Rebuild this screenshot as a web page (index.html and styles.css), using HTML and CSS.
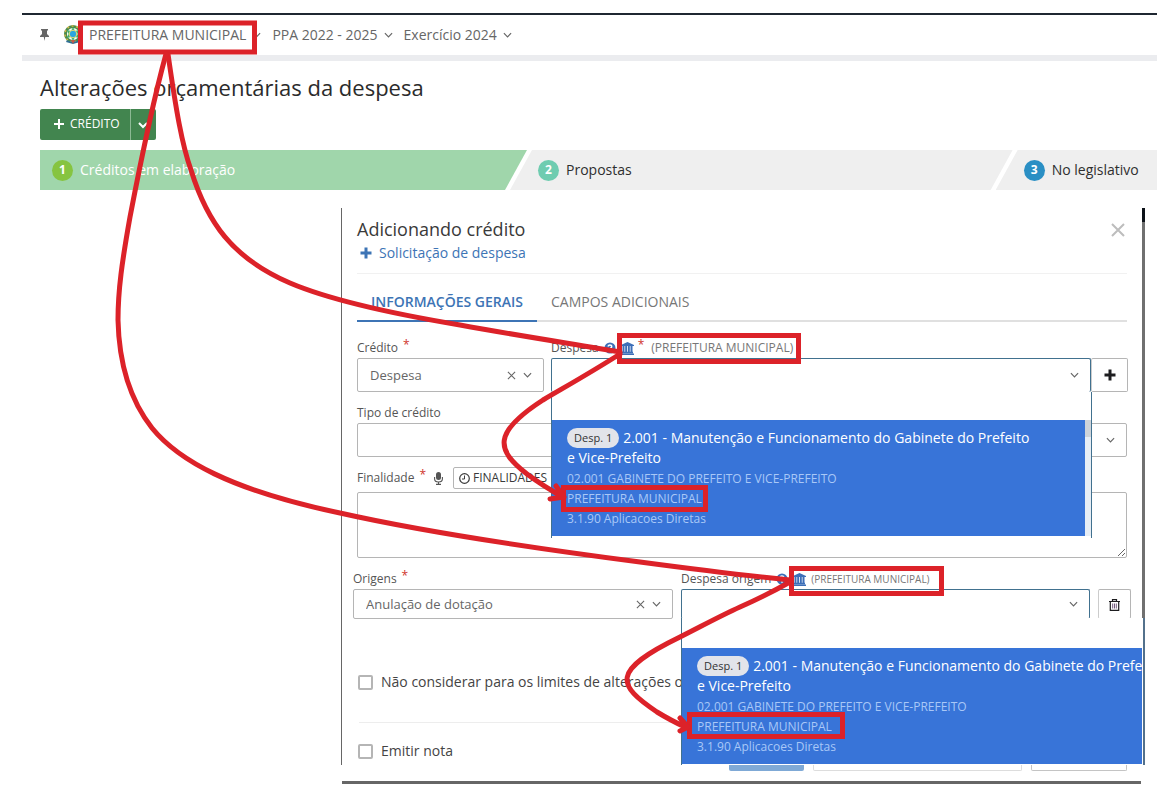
FILE: index.html
```html
<!DOCTYPE html>
<html lang="pt-BR">
<head>
<meta charset="utf-8">
<meta name="viewport" content="width=device-width, initial-scale=1">
<title>Alterações orçamentárias da despesa</title>
<link rel="stylesheet" href="styles.css">
</head>
<body>
<svg class="sprite" aria-hidden="true">
  <symbol id="chevron" viewBox="0 0 10 6"><path d="M1 1l4 4 4-4" fill="none" stroke="currentColor" stroke-width="1.3"/></symbol>
  <symbol id="cross" viewBox="0 0 10 10"><path d="M1 1l8 8M9 1l-8 8" fill="none" stroke="currentColor" stroke-width="1.2"/></symbol>
  <symbol id="plus" viewBox="0 0 12 12"><path d="M6 0.500v11M0.500 6h11" fill="none" stroke="currentColor" stroke-width="3"/></symbol>
  <symbol id="help" viewBox="0 0 12 12"><circle cx="6" cy="6" r="5.500" fill="currentColor"/><path d="M4.200 4.600C4.200 2.300 7.800 2.400 7.700 4.600 7.600 5.900 6 5.700 6 7.200M6 8.200v1.500" fill="none" stroke="#fff" stroke-width="1.500"/></symbol>
  <symbol id="bank" viewBox="0 0 13 13"><path d="M6.500 0L13 3v1H0V3zM1.500 4h2v6H1.500zM4.200 4h1.900v6H4.200zM6.900 4h1.900v6H6.900zM9.500 4h2v6H9.500zM1 9.800h11v1.500H1zM0 11.500h13V13H0z" fill="currentColor"/></symbol>
</svg>

<div class="page">
  <header class="topbar">
    <button class="pin" type="button" aria-label="Fixar menu"><svg width="9" height="12" viewBox="0 0 9 12"><path d="M1 0h7v1.500H7V5l2 2v1H5.200L4.500 12 3.800 8H0V7l2-2V1.500H1z" fill="currentColor"/></svg></button>
    <svg class="emblem" width="18" height="20" viewBox="0 0 18 20" aria-hidden="true">
      <circle cx="9" cy="9" r="7.500" fill="none" stroke="#4d8b4b" stroke-width="3"/>
      <circle cx="9" cy="9" r="8" fill="none" stroke="#d9b94a" stroke-width="1.500" stroke-dasharray="2 2.500"/>
      <path d="M9 2l2 4 4-1-1.500 4L15 13l-4-1-2 4-2-4-4 1 1.500-4L3 5l4 1z" fill="#3fae6d"/>
      <circle cx="9" cy="9" r="3.800" fill="#2ba6df" stroke="#e8dc70"/>
      <path d="M3 15c3 2 9 2 12 0l1 2-7 2-7-2z" fill="#2f6f96"/>
      <path d="M7 15l2 4 2-4z" fill="#c8584a"/>
    </svg>
    <button class="context" type="button">PREFEITURA MUNICIPAL<svg width="9" height="6"><use href="#chevron"/></svg></button>
    <button class="context" type="button">PPA 2022 - 2025<svg width="9" height="6"><use href="#chevron"/></svg></button>
    <button class="context" type="button">Exercício 2024<svg width="9" height="6"><use href="#chevron"/></svg></button>
  </header>

  <main class="content">
    <h1 class="page-title">Alterações orçamentárias da despesa</h1>
    <div class="split-button">
      <button class="split-main" type="button"><svg width="10" height="10" viewBox="0 0 10 10"><path d="M5 0v10M0 5h10" stroke="currentColor" stroke-width="2"/></svg>CRÉDITO</button>
      <button class="split-toggle" type="button" aria-label="Mais opções"><svg width="10" height="7" viewBox="0 0 10 7"><path d="M1 1l4 4 4-4" fill="none" stroke="currentColor" stroke-width="2"/></svg></button>
    </div>
    <ol class="steps">
      <li class="step step-active"><span class="step-number lime">1</span>Créditos em elaboração</li>
      <li class="step"><span class="step-number teal">2</span>Propostas</li>
      <li class="step"><span class="step-number blue">3</span>No legislativo</li>
    </ol>
  </main>

  <section class="dialog" role="dialog" aria-labelledby="dialog-title">
    <div class="dialog-body">
      <div class="dialog-header">
        <div>
          <h2 class="dialog-title" id="dialog-title">Adicionando crédito</h2>
          <a class="request-link" href="#"><svg width="12" height="12"><use href="#plus"/></svg>Solicitação de despesa</a>
        </div>
        <button class="close" type="button" aria-label="Fechar"><svg width="14" height="14" viewBox="0 0 14 14"><path d="M1 1l12 12M13 1L1 13" stroke="currentColor" stroke-width="2"/></svg></button>
      </div>
      <div class="tabs" role="tablist">
        <button class="tab tab-active" type="button" role="tab" aria-selected="true">INFORMAÇÕES GERAIS</button>
        <button class="tab" type="button" role="tab" aria-selected="false">CAMPOS ADICIONAIS</button>
      </div>

      <div class="row credit-row">
        <div class="field">
          <label class="label" for="credito">Crédito <span class="required">*</span></label>
          <div class="control">
            <select id="credito"><option>Despesa</option></select>
            <span class="tools"><button class="clear" type="button" aria-label="Limpar"><svg width="9" height="9"><use href="#cross"/></svg></button><svg width="9" height="6"><use href="#chevron"/></svg></span>
          </div>
        </div>
        <div class="field">
          <label class="label" for="despesa">Despesa <svg class="help" width="12" height="12"><use href="#help"/></svg><svg class="bank" width="13" height="13"><use href="#bank"/></svg><span class="required">*</span><span class="entity">(PREFEITURA MUNICIPAL)</span></label>
          <div class="group">
            <div class="control open">
              <select id="despesa"><option></option></select>
              <span class="tools"><svg width="9" height="6"><use href="#chevron"/></svg></span>
              <div class="popup popup-scroll">
                <input class="search" type="text" aria-label="Buscar despesa">
                <div class="options" role="listbox">
                  <div class="option" role="option" aria-selected="true">
                    <div class="option-title"><span class="pill">Desp. 1</span>2.001 - Manutenção e Funcionamento do Gabinete do Prefeito<br>e Vice-Prefeito</div>
                    <div>02.001 GABINETE DO PREFEITO E VICE-PREFEITO</div>
                    <div>PREFEITURA MUNICIPAL</div>
                    <div>3.1.90 Aplicacoes Diretas</div>
                  </div>
                  <div class="scroll"><div class="thumb"></div></div>
                </div>
              </div>
            </div>
            <button class="square" type="button" aria-label="Adicionar despesa"><svg width="12" height="12"><use href="#plus"/></svg></button>
          </div>
        </div>
      </div>

      <div class="field type-field">
        <label class="label" for="tipo">Tipo de crédito</label>
        <div class="control">
          <select id="tipo"><option></option></select>
          <span class="tools"><svg width="9" height="6"><use href="#chevron"/></svg></span>
        </div>
      </div>

      <div class="field purpose-field">
        <div class="purpose-head">
          <label class="label" for="finalidade">Finalidade <span class="required">*</span></label>
          <button class="mic" type="button" aria-label="Ditar"><svg width="9" height="13" viewBox="0 0 9 13"><rect x="2" width="5" height="8" rx="2.500" fill="currentColor"/><path d="M.600 5v2c0 4 7.800 4 7.800 0V5M4.500 10v2M2 12.400h5" fill="none" stroke="currentColor" stroke-width="1.100"/></svg></button>
          <button class="purposes" type="button"><svg width="11" height="11" viewBox="0 0 11 11"><circle cx="5.500" cy="5.500" r="4.800" fill="none" stroke="currentColor" stroke-width="1.200"/><path d="M5.500 2.500v3.500H3" fill="none" stroke="currentColor"/></svg>FINALIDADES</button>
        </div>
        <textarea id="finalidade"></textarea>
      </div>

      <div class="row origin-row">
        <div class="field">
          <label class="label" for="origens">Origens <span class="required">*</span></label>
          <div class="control">
            <select id="origens"><option>Anulação de dotação</option></select>
            <span class="tools"><button class="clear" type="button" aria-label="Limpar"><svg width="9" height="9"><use href="#cross"/></svg></button><svg width="9" height="6"><use href="#chevron"/></svg></span>
          </div>
        </div>
        <div class="field">
          <label class="label" for="despesa-origem">Despesa origem <svg class="help" width="12" height="12"><use href="#help"/></svg><svg class="bank" width="13" height="13"><use href="#bank"/></svg><span class="entity entity-small">(PREFEITURA MUNICIPAL)</span></label>
          <div class="control open">
            <select id="despesa-origem"><option></option></select>
            <span class="tools"><svg width="9" height="6"><use href="#chevron"/></svg></span>
          </div>
        </div>
        <button class="square trash" type="button" aria-label="Excluir origem"><svg width="11" height="12" viewBox="0 0 11 12"><path d="M0 2.500h11M3.500 2.500V.700h4v1.800M1.300 3v8.300h8.400V3" fill="none" stroke="currentColor" stroke-width="1.200"/><path d="M3.700 4.500v5M5.500 4.500v5M7.300 4.500v5" fill="none" stroke="#63476f" stroke-width=".9"/></svg></button>
        <div class="popup popup-origin">
          <input class="search" type="text" aria-label="Buscar despesa origem">
          <div class="options" role="listbox">
            <div class="option" role="option" aria-selected="true">
              <div class="option-title"><span class="pill">Desp. 1</span>2.001 - Manutenção e Funcionamento do Gabinete do Prefe<br>e Vice-Prefeito</div>
              <div>02.001 GABINETE DO PREFEITO E VICE-PREFEITO</div>
              <div>PREFEITURA MUNICIPAL</div>
              <div>3.1.90 Aplicacoes Diretas</div>
            </div>
          </div>
        </div>
      </div>

      <label class="check limits"><input type="checkbox">Não considerar para os limites de alterações o</label>
      <hr class="rule">
      <label class="check"><input type="checkbox">Emitir nota</label>
    </div>
    <div class="dialog-footer">
      <button class="foot-primary" type="button" aria-label="Salvar"></button>
      <button class="foot-wide" type="button" aria-label="Salvar e continuar"></button>
      <button class="foot-cancel" type="button" aria-label="Cancelar"></button>
    </div>
  </section>

  <svg class="annotations" width="1157" height="801" viewBox="0 0 1157 801" aria-hidden="true">
    <g fill="none" stroke="#dc2229" stroke-width="5">
      <rect x="80.500" y="23" width="174" height="29"/>
      <rect x="619.500" y="335.500" width="179" height="26"/>
      <rect x="563.500" y="487.500" width="142" height="22"/>
      <rect x="791.500" y="568.500" width="150" height="25"/>
      <rect x="689.500" y="714.500" width="153" height="22"/>
      <g stroke-linecap="round" stroke-linejoin="round">
        <path d="M168 54C176 110 182 145 191 170C207 222 232 258 290 283C330 300 400 315 460 325C520 336 580 345 620 352"/>
        <path d="M166 54C152 105 140 165 130 217C122 262 118 290 118 320C119 365 130 400 152 428C178 460 230 490 340 513C420 531 540 549 640 562C700 570 750 576 790 580"/>
        <path d="M620 354C590 373 565 387 543 400C492 433 496 450 527 474Q543 486 563 497M556 486L564 497L550 499"/>
        <path d="M790 582Q765 596 740 607C720 616 700 627 680 637C610 671 617 685 657 712Q670 720 687 728M680 718L688 727L680 731"/>
      </g>
    </g>
  </svg>
</div>
</body>
</html>
```
FILE: styles.css
```css
* { box-sizing: border-box; }

body {
  margin: 0;
  background: #fff;
  color: #444;
  font: 13px/20px "Open Sans", "Noto Sans", sans-serif;
}

button, input, select, textarea {
  margin: 0;
  padding: 0;
  border: 0;
  border-radius: 0;
  background: none;
  color: inherit;
  font: inherit;
}

h1, h2 { margin: 0; font-weight: 400; }

.sprite { position: absolute; width: 0; height: 0; }

.page {
  position: relative;
  padding-top: 13px;
  overflow: hidden;
}

/* Top bar */
.topbar {
  display: flex;
  align-items: center;
  height: 48px;
  margin-left: 22px;
  padding-left: 18px;
  border-top: 2px solid #1f2731;
  border-bottom: 6px solid #ebecef;
  color: #666;
}

.pin { display: flex; margin-right: 15px; }
.emblem { margin-right: 7px; }

.context {
  display: flex;
  align-items: center;
  gap: 6px;
  margin-right: 11px;
  font-size: 14px;
  white-space: nowrap;
}

/* Page heading */
.content { padding: 10px 0 0 40px; }

.page-title {
  color: #2b2b2b;
  font-size: 22px;
  line-height: 32px;
}

.split-button {
  display: flex;
  width: max-content;
  height: 31px;
  margin-top: 6px;
  border-radius: 2px;
  background: #42854f;
  color: #fff;
  font-size: 12px;
}

.split-main {
  display: flex;
  align-items: center;
  gap: 6px;
  padding: 0 10px 2px 14px;
}

.split-toggle {
  width: 26px;
  border-left: 1px solid #8cb994;
}

.steps {
  display: flex;
  height: 40px;
  margin: 10px 0 0;
  padding: 0;
  list-style: none;
}

.step {
  display: flex;
  flex: 1 0 0;
  align-items: center;
  gap: 7px;
  margin-left: -17px;
  padding-left: 28px;
  background: #efefef;
  clip-path: polygon(22px 0, 100% 0, 100% 100%, 0 100%);
  color: #2e2e2e;
  font-size: 14px;
  white-space: nowrap;
}

.step:nth-child(2) {
  flex: 0 0 45%;
  clip-path: polygon(22px 0, 100% 0, calc(100% - 22px) 100%, 0 100%);
}

.step-active {
  flex: 0 0 43.6%;
  margin-left: 0;
  padding-left: 12px;
  background: #a0d6ab;
  clip-path: polygon(0 0, 100% 0, calc(100% - 22px) 100%, 0 100%);
  color: #fff;
}

.step-number {
  width: 21px;
  height: 21px;
  border-radius: 50%;
  color: #fff;
  font-size: 12px;
  font-weight: 700;
  line-height: 20px;
  text-align: center;
}

.lime { background: #86c440; }
.teal { background: #6fccb0; }
.blue { background: #2a8fc4; }

/* Dialog */
.dialog { margin: 18px 12px 17px 341px; }

.dialog-body {
  position: relative;
  padding: 9px 15px 4px;
  border-left: 1px solid #666;
  border-right: 3px solid #707070;
}

.dialog-body::after {
  content: "";
  position: absolute;
  top: 0;
  right: -3px;
  width: 3px;
  height: 14px;
  background: #0c1218;
}

.dialog-header {
  display: flex;
  justify-content: space-between;
  padding-bottom: 9px;
  border-bottom: 1px solid #f1f1f1;
}

.dialog-title {
  margin-bottom: 1px;
  color: #3a3a3a;
  font-size: 18px;
  line-height: 24px;
}

.request-link {
  display: flex;
  align-items: center;
  gap: 7px;
  padding-left: 3px;
  color: #3d74b5;
  font-size: 14px;
  line-height: 22px;
  text-decoration: none;
}

.close {
  display: flex;
  align-self: flex-start;
  margin-top: 6px;
  padding: 0 2px;
  color: #bdbdbd;
}

.tabs {
  display: flex;
  box-shadow: inset 0 -2px #e0e0e0;
}

.tab {
  padding: 18px 14px 8px;
  border-bottom: 2px solid transparent;
  color: #777;
  font-size: 14px;
  white-space: nowrap;
}

.tab-active {
  border-color: #3d74b5;
  color: #3d74b5;
  font-weight: 600;
}

/* Form */
.row { display: grid; }

.credit-row {
  grid-template-columns: 187fr 577fr;
  gap: 7px;
  margin: 16px -1px 0 0;
}

.field { min-width: 0; }

.label {
  display: flex;
  align-items: center;
  color: #555;
  font-size: 12px;
  line-height: 20px;
  white-space: nowrap;
}

.required {
  align-self: flex-start;
  margin: -3px 0 0 5px;
  color: #d0342c;
}

.help { margin-left: 5px; color: #3d6fb8; }
.bank { margin-left: 5px; color: #3d6fb8; }
.bank + .required { margin-left: 4px; }
.entity { margin-left: 7px; color: #777; }
.entity-small { margin-left: 5px; font-size: 10px; }

.control {
  position: relative;
  flex: 1;
}

.control select {
  display: block;
  width: 100%;
  height: 34px;
  padding-left: 12px;
  border: 1px solid #b5b5b5;
  border-radius: 2px;
  background: #fff;
  color: #666;
  appearance: none;
}

.control.open select {
  border-color: #41718f;
  border-bottom: 0;
}

.tools {
  position: absolute;
  top: 0;
  right: 12px;
  bottom: 0;
  display: flex;
  align-items: center;
  gap: 7px;
  color: #666;
}

.clear { display: flex; }
.group { display: flex; }

.square {
  display: flex;
  align-items: center;
  justify-content: center;
  width: 37px;
  height: 34px;
  border: 1px solid #b5b5b5;
  border-left-color: #ccc;
  border-radius: 2px;
  color: #1d1d1f;
}

.type-field { margin-top: 11px; }
.purpose-field { margin-top: 10px; }

.purpose-head {
  display: flex;
  align-items: center;
  height: 22px;
  margin-bottom: 3px;
}

.mic { display: flex; margin: 0 10px 0 8px; color: #555; }

.purposes {
  display: flex;
  align-items: center;
  gap: 3px;
  height: 22px;
  padding: 0 12px 0 5px;
  border: 1px solid #b5b5b5;
  border-radius: 2px;
  color: #3a3a3a;
  font-size: 12px;
}

textarea {
  display: block;
  width: 100%;
  height: 66px;
  border: 1px solid #b5b5b5;
  border-radius: 2px;
  resize: vertical;
}

.origin-row {
  position: relative;
  grid-template-columns: 320fr 409fr 33px;
  align-items: end;
  gap: 8px;
  margin: 11px -4px 0;
}

.origin-row .control select { height: 30px; }

.trash {
  width: 33px;
  height: 30px;
  border-bottom: 0;
}

/* Open lists */
.popup {
  position: absolute;
  z-index: 1;
  background: #fff;
  white-space: nowrap;
}

.popup-scroll {
  top: 34px;
  right: -1px;
  left: 0;
  padding-bottom: 2px;
  border: solid #41718f;
  border-width: 0 1px;
}

.popup-origin {
  top: 49px;
  right: -14px;
  left: calc((100% - 49px) * 320 / 729 + 8px);
  padding: 0 2px 1px 0;
  border-left: 1px solid #41718f;
  border-right: 2px solid #53718c;
}

.search {
  display: block;
  width: 100%;
  height: 28px;
  outline: 0;
}

.popup-origin .search { height: 30px; }
.options { display: flex; }

.option {
  flex: 1;
  height: 116px;
  padding: 8px 0 0 15px;
  background: #3874d8;
  color: #a9c8f7;
  font-size: 12px;
}

.option-title {
  margin-bottom: 1px;
  color: #fff;
  font-size: 14px;
}

.pill {
  display: inline-block;
  margin-right: 4px;
  padding: 0 7px;
  border-radius: 10px;
  background: #e2e4ea;
  color: #333;
  font-size: 11px;
  vertical-align: top;
}

.scroll { width: 6px; background: #e6edf5; }
.thumb { height: 17px; background: #cdd3da; }

.check {
  display: flex;
  align-items: center;
  gap: 8px;
  padding-left: 1px;
  color: #444;
  font-size: 14px;
  white-space: nowrap;
}

.limits { margin-top: 53px; }

.check input {
  width: 15px;
  height: 15px;
  border: 2px solid #b5b5b5;
  border-radius: 2px;
  appearance: none;
}

.rule {
  height: 1px;
  margin: 30px 0 18px 2px;
  border: 0;
  background: #ededed;
}

.dialog-footer {
  display: grid;
  grid-template-columns: 75px 209px 96px;
  gap: 9px;
  justify-content: end;
  height: 19px;
  margin: 0 4px 0 1px;
  padding-right: 14px;
  border-bottom: 3px solid #666;
}

.dialog-footer button {
  height: 6px;
  border: 1px solid #c4c4c4;
  border-top: 0;
  border-radius: 0 0 2px 2px;
}

.dialog-footer .foot-primary { border: 0; background: #7fa9d6; }
.dialog-footer .foot-wide { border-color: #ddd; }

/* Callouts drawn over the screen */
.annotations {
  position: absolute;
  z-index: 2;
  top: 0;
  left: 0;
  pointer-events: none;
}
```
